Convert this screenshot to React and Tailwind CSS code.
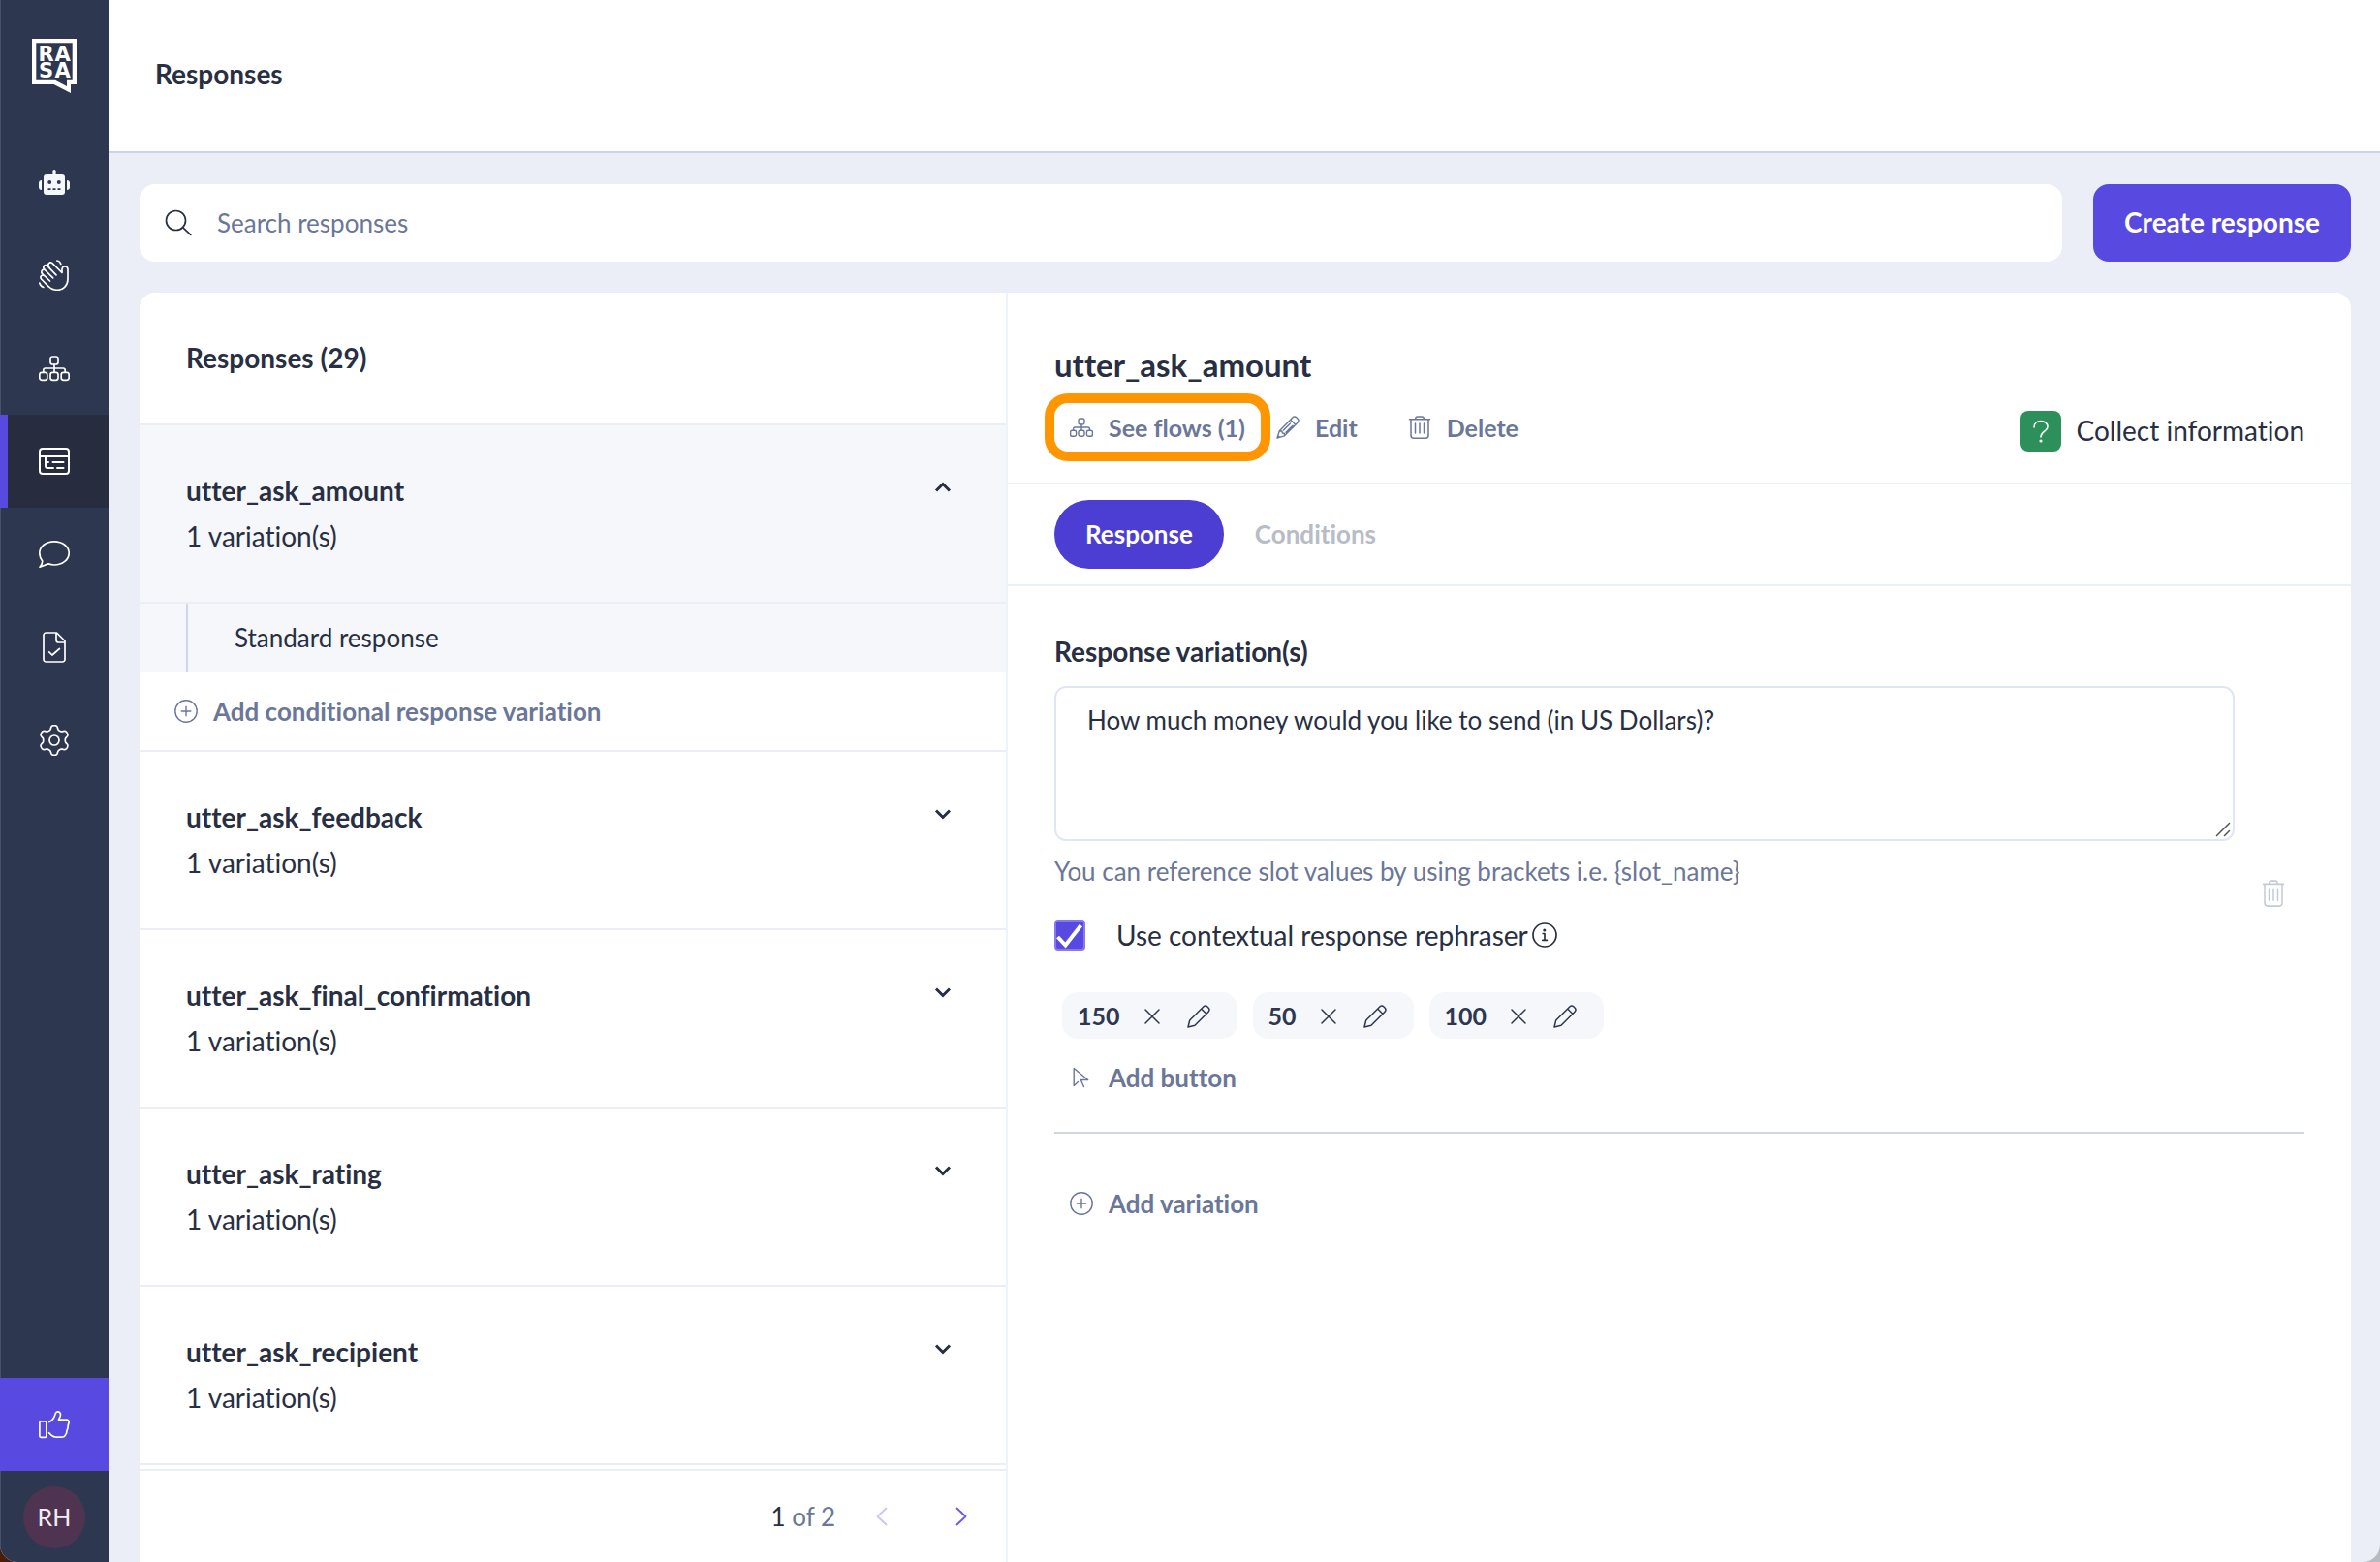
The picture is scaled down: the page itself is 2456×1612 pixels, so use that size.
function Svg({ w = 32, h = 32, sw = 1.7, children, className = '' }) {
  return (
    <svg
      width={w}
      height={h}
      viewBox={`0 0 ${w} ${h}`}
      fill="none"
      stroke="currentColor"
      strokeWidth={sw}
      strokeLinecap="round"
      strokeLinejoin="round"
      aria-hidden="true"
      className={`shrink-0 ${className}`}
    >
      {children}
    </svg>
  );
}

const gearPath = (() => {
  const pts = [];
  for (let i = 0; i < 144; i += 1) {
    const a = (i / 144) * Math.PI * 2;
    const r = 13.3 + 2.1 * Math.tanh(1.8 * Math.cos(6 * a));
    pts.push(`${(16 + r * Math.sin(a)).toFixed(2)} ${(16 - r * Math.cos(a)).toFixed(2)}`);
  }
  return `M${pts.join('L')}Z`;
})();

const Logo = () => (
  <svg width="46" height="56" viewBox="0 0 46 56" fill="#fff" role="img" aria-label="Rasa" className="shrink-0">
    <path fillRule="evenodd" d="M0 0H46V47H40V56L22.5 47H0ZM4.3 4.3V42.7H24L36 49V42.7H41.7V4.3Z" />
    <text fontFamily="DejaVu Sans" fontWeight="700" fontSize="21">
      <tspan x="6.500 23.400" y="22.500">RA</tspan>
      <tspan x="7 23.400" y="40">SA</tspan>
    </text>
  </svg>
);

const Robot = () => (
  <svg width="32" height="32" viewBox="0 0 32 32" fill="#f5f7fb" aria-hidden="true">
    <rect x="14.4" y="3" width="3.2" height="7" rx="1.5" />
    <rect x="5" y="8" width="22" height="21" rx="3" />
    <path d="M3 14v10C1 24 0 22.800 0 21v-4c0-1.800 1-3 3-3zM29 14v10c2 0 3-1.200 3-3v-4c0-1.800-1-3-3-3z" />
    <g fill="#2d3850">
      <circle cx="11.200" cy="16" r="2" />
      <circle cx="20.800" cy="16" r="2" />
      <path d="M9.500 22.200h3v1.700h-3zM14.500 22.200h3v1.700h-3zM19.500 22.200h3v1.700h-3z" />
    </g>
  </svg>
);

const Hand = () => (
  <Svg>
    <path d="M24 12.500V10a3 3 0 0 1 6 0v10c0 6.500-4.500 11.300-11 11.300-3.800 0-6.700-1.500-9.200-4L2.600 20a2.300 2.300 0 0 1 3.300-3.300l5.600 5.300" />
    <path d="M4.800 15.800l-1.300-1.500a2.300 2.300 0 0 1 3.300-3.300l7.900 7.900" />
    <path d="M6.300 10.500l-.8-.900a2.300 2.300 0 0 1 3.300-3.300L18 15.800" />
    <path d="M10.600 7.400c-2.300-2.900 1-6 3.500-3.700L24 13.500" />
    <path d="M18.800 1c2 .2 3.300 1.300 4 3.500M.8 24c.4 2.200 1.600 3.700 4 4.500" />
  </Svg>
);

const FlowShapes = () => (
  <>
    <rect x="12" y="4" width="8" height="8" rx="2.300" />
    <rect x=".8" y="20.400" width="8" height="8" rx="2.300" />
    <rect x="12" y="20.400" width="8" height="8" rx="2.300" />
    <rect x="23.200" y="20.400" width="8" height="8" rx="2.300" />
    <path d="M16 12v8M4.800 20v-2c0-1.300.7-2 2-2h18.400c1.300 0 2 .7 2 2v2" />
  </>
);

const Flows = () => (
  <Svg>
    <FlowShapes />
  </Svg>
);

const FlowsSmall = () => (
  <svg width="24" height="24" viewBox="0 0 32 32" fill="none" stroke="currentColor" strokeWidth="1.900" strokeLinecap="round" aria-hidden="true" className="shrink-0">
    <FlowShapes />
  </svg>
);

const Responses = () => (
  <Svg sw={2}>
    <rect x="1" y="3" width="30" height="26" rx="3" />
    <path d="M1 11h30M7 11v9.500c0 1.500.8 2.500 2.300 2.500H15M7 17h3M14.500 17h11M19 23h6.500" />
  </Svg>
);

const Chat = () => (
  <Svg>
    <path d="M16 2.800c8.500 0 15.200 5.200 15.200 12S24.500 27 16 27c-2.200 0-4.300-.500-6.200-1.100L1 29.200c1.600-1.800 3-4 2.600-6.500C1.900 20.500.8 17.800.8 14.800.8 8 7.500 2.800 16 2.800z" />
  </Svg>
);

const Doc = () => (
  <Svg>
    <path d="M18.500 1H7.500a2.500 2.500 0 0 0-2.500 2.500v25A2.500 2.500 0 0 0 7.500 31h17a2.500 2.500 0 0 0 2.500-2.500V9.500zM18 1v7.500A2.500 2.500 0 0 0 20.500 11H27M10.700 20.800l3.200 3.200 7.500-6.500" />
  </Svg>
);

const Gear = () => (
  <Svg>
    <path d={gearPath} />
    <circle cx="16" cy="16" r="5" />
  </Svg>
);

const Thumb = () => (
  <Svg>
    <rect x=".9" y="12.800" width="7" height="16.500" rx="1.200" />
    <path d="M10.800 13.500C14 12 16 9 17 5.500c.5-2 1.700-3 3.200-2.600 2.200.6 2.700 2.700 1.900 4.900l-1.600 3.400h8c2 0 3 1.600 2.500 3.300l-.8 2.800-.300 2.800-1 2.700-.4 2.600-1.300 2c-.6 1.200-1.200 1.600-2.200 1.600-2.600.2-5.400.3-8 0-2.500-.3-4.500-2-6.400-4.300" />
  </Svg>
);

const Trash = ({ h = 24, sw = 1.5 }) => (
  <svg width="24" height={h} viewBox="0 0 24 24" preserveAspectRatio="none" fill="none" stroke="currentColor" strokeWidth={sw} strokeLinecap="round" strokeLinejoin="round" aria-hidden="true" className="shrink-0">
    <path d="M1.500 3.800h21M7.500 3.500c.2-1.600 1-2.500 2.300-2.500h4.400c1.300 0 2.100.9 2.300 2.500M3 4v16.200c0 1.800 1.200 3 3 3h12c1.800 0 3-1.200 3-3V4M7.500 8v10M12 8v10M16.500 8v10" />
  </svg>
);

const EditPencil = () => (
  <Svg w={24} h={24} sw={1.4}>
    <path d="M1 23l2.300-7.300L16.800 2a3 3 0 0 1 4.200 0l1 1a3 3 0 0 1 0 4.200L8.400 20.800zM14.800 4.200l5 5M3.300 15.700l2.700.3.300 2 2 .3.300 2.400M7.500 15l7-7M10 17.200l7-7M1.800 20.500l1.700 1.700" />
  </Svg>
);

const ChipPencil = () => (
  <Svg w={24} h={24} sw={1.5}>
    <path d="M1 23l1.700-7L16.800 2a3 3 0 0 1 4.200 0l1 1a3 3 0 0 1 0 4.200L8 21.300zM14.800 4.200l5 5" />
  </Svg>
);

const Cross = () => (
  <Svg w={16} h={16} sw={1.5}>
    <path d="M1 1l14 14M15 1L1 15" />
  </Svg>
);

const Cursor = () => (
  <Svg w={24} h={24} sw={1.4}>
    <path d="M8.500 16.500l-4.300 4V2.500l14.500 12h-7.400l3.200 7" />
  </Svg>
);

const PlusCircle = () => (
  <Svg w={24} h={24} sw={1.4}>
    <circle cx="12" cy="12" r="11.200" />
    <path d="M12 7.200v9.600M7.200 12h9.600" />
  </Svg>
);

const Info = () => (
  <Svg w={26} h={26} sw={1.7}>
    <circle cx="13" cy="13" r="12" />
    <path d="M11.200 11.500H13V18M10.800 18.300h4.600" />
    <circle cx="12.800" cy="8" r=".7" fill="currentColor" />
  </Svg>
);

const Chevron = ({ open }) => (
  <Svg w={18} h={12} sw={3}>
    <path strokeLinecap="butt" strokeLinejoin="miter" d={open ? 'M2 9.500l7-7 7 7' : 'M2 2.500l7 7 7-7'} />
  </Svg>
);

const NAV = [
  { label: 'Assistant', Icon: Robot },
  { label: 'Welcome', Icon: Hand },
  { label: 'Flows', Icon: Flows },
  { label: 'Responses', Icon: Responses, active: true },
  { label: 'Conversations', Icon: Chat },
  { label: 'Versions', Icon: Doc },
  { label: 'Settings', Icon: Gear },
];

const ITEMS = ['utter_ask_feedback', 'utter_ask_final_confirmation', 'utter_ask_rating', 'utter_ask_recipient'];

function Sidebar() {
  return (
    <nav className="flex w-28 shrink-0 flex-col bg-[#2d3850] text-white shadow-[inset_1px_0_0_#46516a]">
      <a href="#home" className="flex h-[140px] justify-center pt-10">
        <Logo />
      </a>
      {NAV.map(({ label, Icon, active }) => (
        <a
          key={label}
          href={`#${label.toLowerCase()}`}
          aria-label={label}
          className={
            active
              ? 'flex h-24 items-center justify-center border-l-8 border-[#584ae1] bg-[#282c3f] pr-2'
              : 'flex h-24 items-center justify-center'
          }
        >
          <Icon />
        </a>
      ))}
      <button aria-label="Feedback" className="mt-auto flex h-24 items-center justify-center bg-[#584ae1]">
        <Thumb />
      </button>
      <div className="flex h-[94px] justify-center pt-4">
        <button className="size-16 rounded-full bg-[#4f3452] pb-0.5 text-[25px] leading-none text-[#f0eef3]">RH</button>
      </div>
    </nav>
  );
}

function ListItem({ name, open }) {
  return (
    <button
      aria-expanded={!!open}
      className={
        open
          ? 'flex w-full items-start justify-between border-b-2 border-[#ebeef7] bg-[#f5f7fb] pt-11 pr-14 pb-11 pl-12 text-left'
          : 'flex w-full items-start justify-between border-b-2 border-[#ebeef7] pt-11 pr-14 pb-11 pl-12 text-left'
      }
    >
      <span className="flex flex-col text-[28px] leading-[47px]">
        <span className="font-bold">{name}</span>
        <span>1 variation(s)</span>
      </span>
      <span className="pt-3.5">
        <Chevron open={open} />
      </span>
    </button>
  );
}

function ResponseList() {
  return (
    <section className="flex w-[896px] shrink-0 flex-col border-r-2 border-[#eef2f9]">
      <h2 className="border-b-2 border-[#ebeef7] px-12 pt-[47px] pb-12 text-[28px] leading-10 font-bold">Responses (29)</h2>
      <ListItem name="utter_ask_amount" open />
      <div className="bg-[#f5f7fb] pl-12">
        <button className="block w-full border-l-2 border-[#cfd6e8] py-4 pl-12 text-left text-[26px] leading-[39px]">
          Standard response
        </button>
      </div>
      <button className="flex items-center gap-4 border-b-2 border-[#ebeef7] py-5 pl-9 text-[26px] leading-10 font-bold text-[#6b7799]">
        <PlusCircle />
        Add conditional response variation
      </button>
      {ITEMS.map((name) => (
        <ListItem key={name} name={name} />
      ))}
      <div className="mt-auto flex items-center justify-end border-t-2 border-[#ebeef7] py-[27px] pr-[34px] text-[26px] leading-10">
        <p className="text-[#6b7799]">
          <span className="text-[#282f43]">1</span> of 2
        </p>
        <button aria-label="Previous page" disabled className="ml-9 p-1 text-[#cbc4f8]">
          <Svg w={16} h={20} sw={1.8}>
            <path d="M12.500 1.500L3.500 10l9 8.500" />
          </Svg>
        </button>
        <button aria-label="Next page" className="ml-[58px] p-1 text-[#6657f0]">
          <Svg w={16} h={20} sw={1.8}>
            <path d="M3.500 1.500l9 8.500-9 8.500" />
          </Svg>
        </button>
      </div>
    </section>
  );
}

function Detail() {
  return (
    <section className="min-w-0 flex-1">
      <header className="flex items-end justify-between border-b-2 border-[#ebeff6] px-12 pt-[52px] pb-8">
        <div>
          <h2 className="text-[33px] leading-[44px] font-bold">utter_ask_amount</h2>
          <div className="mt-[18px] flex text-[25px] leading-none font-bold text-[#6b7799]">
            <button className="flex h-[50px] items-center gap-4 rounded-[14px] px-4 outline-10 outline-[#ff9500]">
              <FlowsSmall />
              See flows (1)
            </button>
            <button className="flex h-[50px] items-center gap-4 px-4">
              <EditPencil />
              Edit
            </button>
            <button className="ml-5 flex h-[50px] items-center gap-4 px-4">
              <Trash />
              Delete
            </button>
          </div>
        </div>
        <div className="flex items-center gap-4 text-[28px] leading-10">
          <span className="flex size-[42px] items-center justify-center rounded-lg bg-[#2d8f5a] text-white">
            <Svg w={16} h={24} sw={1.6}>
              <path d="M1 8c0-4 3-6.500 7-6.500s7 2.500 7 6c0 5-7 4.500-7 10.500" />
              <circle cx="8" cy="22" r=".8" fill="currentColor" />
            </Svg>
          </span>
          <span className="pb-0.5">Collect information</span>
        </div>
      </header>

      <div role="tablist" className="flex border-b-2 border-[#ebeff6] px-12 py-4 text-[26px] leading-[39px] font-bold">
        <button role="tab" aria-selected="true" className="rounded-full bg-[#4c3dd3] px-8 py-4 text-white">
          Response
        </button>
        <button role="tab" aria-selected="false" className="px-8 py-4 text-[#b7bcc6]">
          Conditions
        </button>
      </div>

      <div className="px-12 pt-[47px]">
        <label htmlFor="variation" className="block text-[28px] leading-10 font-bold">
          Response variation(s)
        </label>
        <div className="mt-4 flex items-center gap-7">
          <div className="min-w-0 flex-1">
            <div className="relative">
              <textarea
                id="variation"
                defaultValue="How much money would you like to send (in US Dollars)?"
                className="block h-40 w-full resize-none rounded-xl border-2 border-[#e1e7f2] bg-white px-8 py-4 text-[26px] leading-[34px]"
              />
              <Svg w={16} h={16} sw={1.5} className="pointer-events-none absolute right-1 bottom-1 text-[#555]">
                <path d="M1.500 14.500l13-13M9.500 14.500l5-5" />
              </Svg>
            </div>
            <p className="mt-[13px] text-[26px] leading-9 text-[#6b7799]">
              You can reference slot values by using brackets i.e. {'{slot_name}'}
            </p>
            <div className="mt-7 flex items-center">
              <span className="relative size-8">
                <input
                  id="rephraser"
                  type="checkbox"
                  defaultChecked
                  className="block size-8 appearance-none rounded-sm border-2 border-[#8579f2] bg-[#584ae1]"
                />
                <Svg sw={4} className="pointer-events-none absolute inset-0 text-white">
                  <path strokeLinecap="butt" strokeLinejoin="miter" d="M3.500 18l8 8.500L27.500 6" />
                </Svg>
              </span>
              <label htmlFor="rephraser" className="ml-8 text-[28px] leading-10">
                Use contextual response rephraser
              </label>
              <button aria-label="About the rephraser" className="ml-1">
                <Info />
              </button>
            </div>
            <div className="mt-[39px] flex gap-4 pl-2">
              {['150', '50', '100'].map((value) => (
                <div key={value} className="flex h-12 items-center rounded-2xl bg-[#f5f7fb] pr-7 pl-4 text-[#2d3850]">
                  <span className="text-[25px] leading-none font-bold">{value}</span>
                  <button aria-label={`Remove ${value}`} className="ml-[25px] pt-0.5">
                    <Cross />
                  </button>
                  <button aria-label={`Edit ${value}`} className="ml-7 pt-0.5">
                    <ChipPencil />
                  </button>
                </div>
              ))}
            </div>
            <button className="mt-5 flex items-center gap-4 pl-4 text-[26px] leading-10 font-bold text-[#6b7799]">
              <Cursor />
              Add button
            </button>
          </div>
          <button aria-label="Delete variation" className="mr-5 pt-1 text-[#c4c9da]">
            <Trash h={28} />
          </button>
        </div>
        <hr className="mt-9 border-t-2 border-[#cfd6e8]" />
        <button className="mt-[52px] flex items-center gap-4 pl-4 text-[26px] leading-10 font-bold text-[#6b7799]">
          <PlusCircle />
          Add variation
        </button>
      </div>
    </section>
  );
}

export default function App() {
  return (
    <div className="bg-linear-to-r from-[#4a1c0a] to-[#b9bbc2]">
      <div className="flex min-h-screen overflow-hidden rounded-b-[18px] bg-[#ebeef7] font-['Lato',sans-serif] text-[#282f43] [font-variant-ligatures:none]">
        <Sidebar />
        <div className="flex min-w-0 flex-1 flex-col">
          <header className="border-b-2 border-[#cdd4e8] bg-white px-12 pt-14 pb-[60px]">
            <h1 className="text-[28px] leading-10 font-bold">Responses</h1>
          </header>
          <main className="flex flex-1 flex-col pt-8 pr-[30px] pl-8">
            <div className="flex gap-8">
              <label className="flex h-20 min-w-0 flex-1 items-center gap-[26px] rounded-2xl bg-white px-[26px]">
                <Svg w={28} h={28} sw={1.7}>
                  <circle cx="11.500" cy="11.500" r="10" />
                  <path d="M18.800 18.800l8 7.500" />
                </Svg>
                <input
                  type="text"
                  aria-label="Search responses"
                  placeholder="Search responses"
                  className="min-w-0 flex-1 bg-transparent text-[26px] leading-10 outline-none placeholder:text-[#6b7799]"
                />
              </label>
              <button className="h-20 rounded-2xl bg-[#584ae1] px-8 pb-0.5 text-[28px] leading-10 font-bold text-white">
                Create response
              </button>
            </div>
            <div className="mt-8 flex flex-1 rounded-t-2xl bg-white">
              <ResponseList />
              <Detail />
            </div>
          </main>
        </div>
      </div>
    </div>
  );
}
